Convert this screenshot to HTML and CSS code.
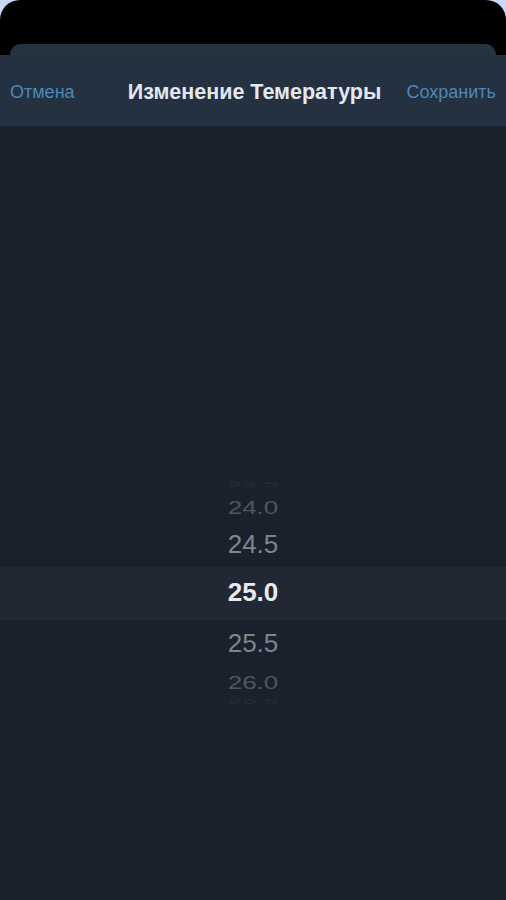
FILE: index.html
```html
<!DOCTYPE html>
<html lang="ru">
<head>
<meta charset="utf-8">
<title>Изменение Темературы</title>
<link rel="stylesheet" href="styles.css">
</head>
<body>
<div class="device">
  <div class="sheet-back"></div>
  <div class="sheet">
    <header class="header">
      <span class="action">Отмена</span>
      <span class="title">Изменение Темературы</span>
      <span class="action">Сохранить</span>
    </header>
    <main class="content">
      <div class="picker">
        <div class="row r-edge-top"><span>23.5</span></div>
        <div class="row r-far r-far-top"><span>24.0</span></div>
        <div class="row r-near"><span>24.5</span></div>
        <div class="row r-selected"><span>25.0</span></div>
        <div class="row r-near"><span>25.5</span></div>
        <div class="row r-far r-far-bottom"><span>26.0</span></div>
        <div class="row r-edge-bottom"><span>26.5</span></div>
      </div>
    </main>
  </div>
</div>
</body>
</html>
```
FILE: styles.css
```css
html, body {
  margin: 0;
  padding: 0;
  background: #c8d8f6;
  height: 900px;
  overflow: hidden;
}

.device {
  background: #000;
  border-radius: 20px 20px 0 0;
  height: 900px;
  padding-top: 44px;
  box-sizing: border-box;
  display: flex;
  flex-direction: column;
  font-family: "Liberation Sans", Arial, sans-serif;
}

.sheet-back {
  height: 11px;
  margin: 0 10px;
  background: #263341;
  border-radius: 12px 12px 0 0;
  flex: none;
}

.sheet {
  flex: 1;
  background: #1b212c;
  display: flex;
  flex-direction: column;
}

.header {
  height: 71px;
  background: #243140;
  display: flex;
  align-items: center;
  justify-content: space-between;
  padding: 3px 10px 0 10px;
  box-sizing: border-box;
  flex: none;
}

.action {
  color: #4e86b9;
  font-size: 18px;
}

.title {
  color: #e4e8ee;
  font-size: 21.5px;
  font-weight: bold;
  margin-left: 28px;
}

.content {
  flex: 1;
  display: flex;
  flex-direction: column;
  padding-top: 355px;
}

.picker {
  display: flex;
  flex-direction: column;
  align-items: stretch;
}

.row {
  display: flex;
  align-items: center;
  justify-content: center;
  font-size: 26px;
  line-height: 1;
  color: #7e858f;
  overflow: hidden;
}

.row span {
  display: block;
}

.r-edge-top,
.r-edge-bottom {
  height: 8px;
  color: #262d38;
}

.r-edge-top span,
.r-edge-bottom span {
  transform: scaleY(0.25);
}

.r-far {
  height: 32px;
  color: #4f5661;
}

.r-far span {
  transform: scaleY(0.7);
}

.r-far-top {
  align-items: flex-end;
}

.r-far-bottom {
  align-items: flex-start;
  padding-top: 4px;
  box-sizing: border-box;
}

.r-near {
  height: 46px;
}

.r-selected {
  height: 53px;
  padding-bottom: 3px;
  box-sizing: border-box;
  background: #212833;
  color: #e6e9ee;
  font-weight: bold;
}
```
